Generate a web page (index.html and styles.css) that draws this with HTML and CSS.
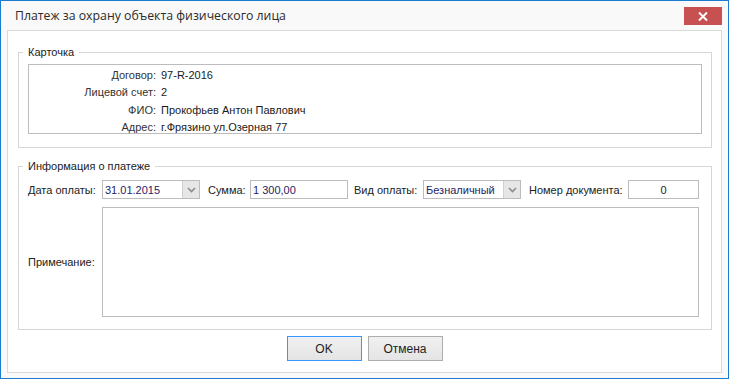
FILE: index.html
```html
<!DOCTYPE html>
<html lang="ru">
<head>
<meta charset="utf-8">
<title>Платеж</title>
<link rel="stylesheet" href="styles.css">
</head>
<body>
<div class="window">
  <div class="titlebar">
    <span class="title">Платеж за охрану объекта физического лица</span>
    <button class="close" aria-label="Закрыть">
      <svg width="10" height="9" viewBox="0 0 10 9"><path d="M1 0.5 L9 8.5 M9 0.5 L1 8.5" stroke="#fff" stroke-width="2"/></svg>
    </button>
  </div>
  <div class="client">
    <fieldset class="group card">
      <legend>Карточка</legend>
      <div class="panel">
        <span class="k">Договор:</span><span class="v">97-R-2016</span>
        <span class="k">Лицевой счет:</span><span class="v">2</span>
        <span class="k">ФИО:</span><span class="v">Прокофьев Антон Павлович</span>
        <span class="k">Адрес:</span><span class="v">г.Фрязино ул.Озерная 77</span>
      </div>
    </fieldset>
    <fieldset class="group pay">
      <legend>Информация о платеже</legend>
      <div class="row">
        <span class="lbl lbl-date">Дата оплаты:</span>
        <div class="combo"><span class="val">31.01.2015</span><span class="arrow"><svg width="9" height="6" viewBox="0 0 9 6"><path d="M1 1 L4.5 4.5 L8 1" fill="none" stroke="#8c8c8c" stroke-width="1.6"/></svg></span></div>
        <span class="lbl lbl-sum">Сумма:</span>
        <div class="input sum"><span class="val">1 300,00</span></div>
        <span class="lbl lbl-kind">Вид оплаты:</span>
        <div class="combo"><span class="val">Безналичный</span><span class="arrow"><svg width="9" height="6" viewBox="0 0 9 6"><path d="M1 1 L4.5 4.5 L8 1" fill="none" stroke="#8c8c8c" stroke-width="1.6"/></svg></span></div>
        <span class="lbl lbl-doc">Номер документа:</span>
        <div class="input doc"><span class="val">0</span></div>
      </div>
      <div class="note-row">
        <span class="lbl lbl-note">Примечание:</span>
        <div class="textarea"></div>
      </div>
    </fieldset>
    <div class="buttons">
      <button class="btn default">OK</button>
      <button class="btn">Отмена</button>
    </div>
  </div>
</div>
</body>
</html>
```
FILE: styles.css
```css
* { box-sizing: border-box; }
html, body { margin: 0; padding: 0; background: #ffffff; }
body { font-family: "Liberation Sans", Arial, sans-serif; font-size: 11px; color: #222; }

.window {
  width: 729px;
  height: 379px;
  border: 1px solid #1a7bd0;
  background: #f9f9f9;
  display: flex;
  flex-direction: column;
}

.titlebar {
  height: 29px;
  display: flex;
  align-items: flex-start;
  justify-content: space-between;
  padding-left: 14px;
  padding-right: 6px;
}
.title {
  font-family: "Open Sans", "Noto Sans", sans-serif;
  font-size: 12.3px;
  color: #2b2b2b;
  line-height: 16px;
  margin-top: 7px;
}
.close {
  width: 38px;
  height: 18px;
  margin-top: 6px;
  border: none;
  padding: 0;
  background: #c75050;
  display: flex;
  align-items: center;
  justify-content: center;
}

.client {
  margin: 0 6px 5px 6px;
  height: 343px;
  border: 1px solid #d9d9d9;
  background: #ffffff;
  padding: 14px 9px 0 10px;
  display: flex;
  flex-direction: column;
}

.group {
  margin: 0;
  border: 1px solid #d6d6d6;
  padding: 0 9px 0 9px;
  min-width: 0;
}
.group legend {
  padding: 0 5px 0 5px;
  margin-left: -5px;
  line-height: 14px;
  color: #222;
}
.card { height: 103px; }
.panel {
  margin-top: 5px;
  height: 70px;
  border: 1px solid #bcbcbc;
  display: grid;
  grid-template-columns: 127px 1fr;
  column-gap: 5px;
  grid-auto-rows: 17.5px;
  align-items: center;
  padding-top: 1px;
}
.panel .k { text-align: right; color: #333; }
.panel .v { color: #1a1a1a; }

.pay { margin-top: 11px; height: 171px; padding-right: 11px; }
.row {
  display: flex;
  align-items: center;
  height: 19px;
  margin-top: 7px;
}
.lbl { color: #222; white-space: nowrap; }
.lbl-date { width: 74px; }
.lbl-sum { width: 42px; margin-left: 8px; }
.lbl-kind { width: 69px; margin-left: 6px; }
.lbl-doc { width: 99px; margin-left: 8px; }

.combo, .input {
  height: 19px;
  border: 1px solid #bcbcbc;
  background: #fff;
  display: flex;
  align-items: center;
}
.combo { width: 98px; }
.combo .val { flex: 1; padding-left: 2px; color: #1f2466; }
.combo .arrow {
  width: 17px;
  height: 17px;
  background: #e6e6e6;
  border-left: 1px solid #d0d0d0;
  display: flex;
  align-items: center;
  justify-content: center;
}
.input.sum { width: 98px; }
.input .val { padding-left: 2px; color: #1f2466; }
.input.doc { width: 71px; justify-content: center; }
.input.doc .val { padding: 0; color: #222; }

.note-row {
  display: flex;
  align-items: center;
  margin-top: 8px;
}
.lbl-note { width: 74px; }
.textarea {
  width: 597px;
  height: 110px;
  border: 1px solid #bcbcbc;
  background: #fff;
}

.buttons {
  display: flex;
  justify-content: center;
  gap: 6px;
  margin-top: 6px;
  padding-right: 1px;
}
.btn {
  width: 75px;
  height: 25px;
  font-family: "Liberation Sans", Arial, sans-serif;
  font-size: 12px;
  color: #222;
  border: 1px solid #adadad;
  background: linear-gradient(#f0f0f0, #e5e5e5);
  padding: 0;
}
.btn.default { border-color: #3399ff; }
```
